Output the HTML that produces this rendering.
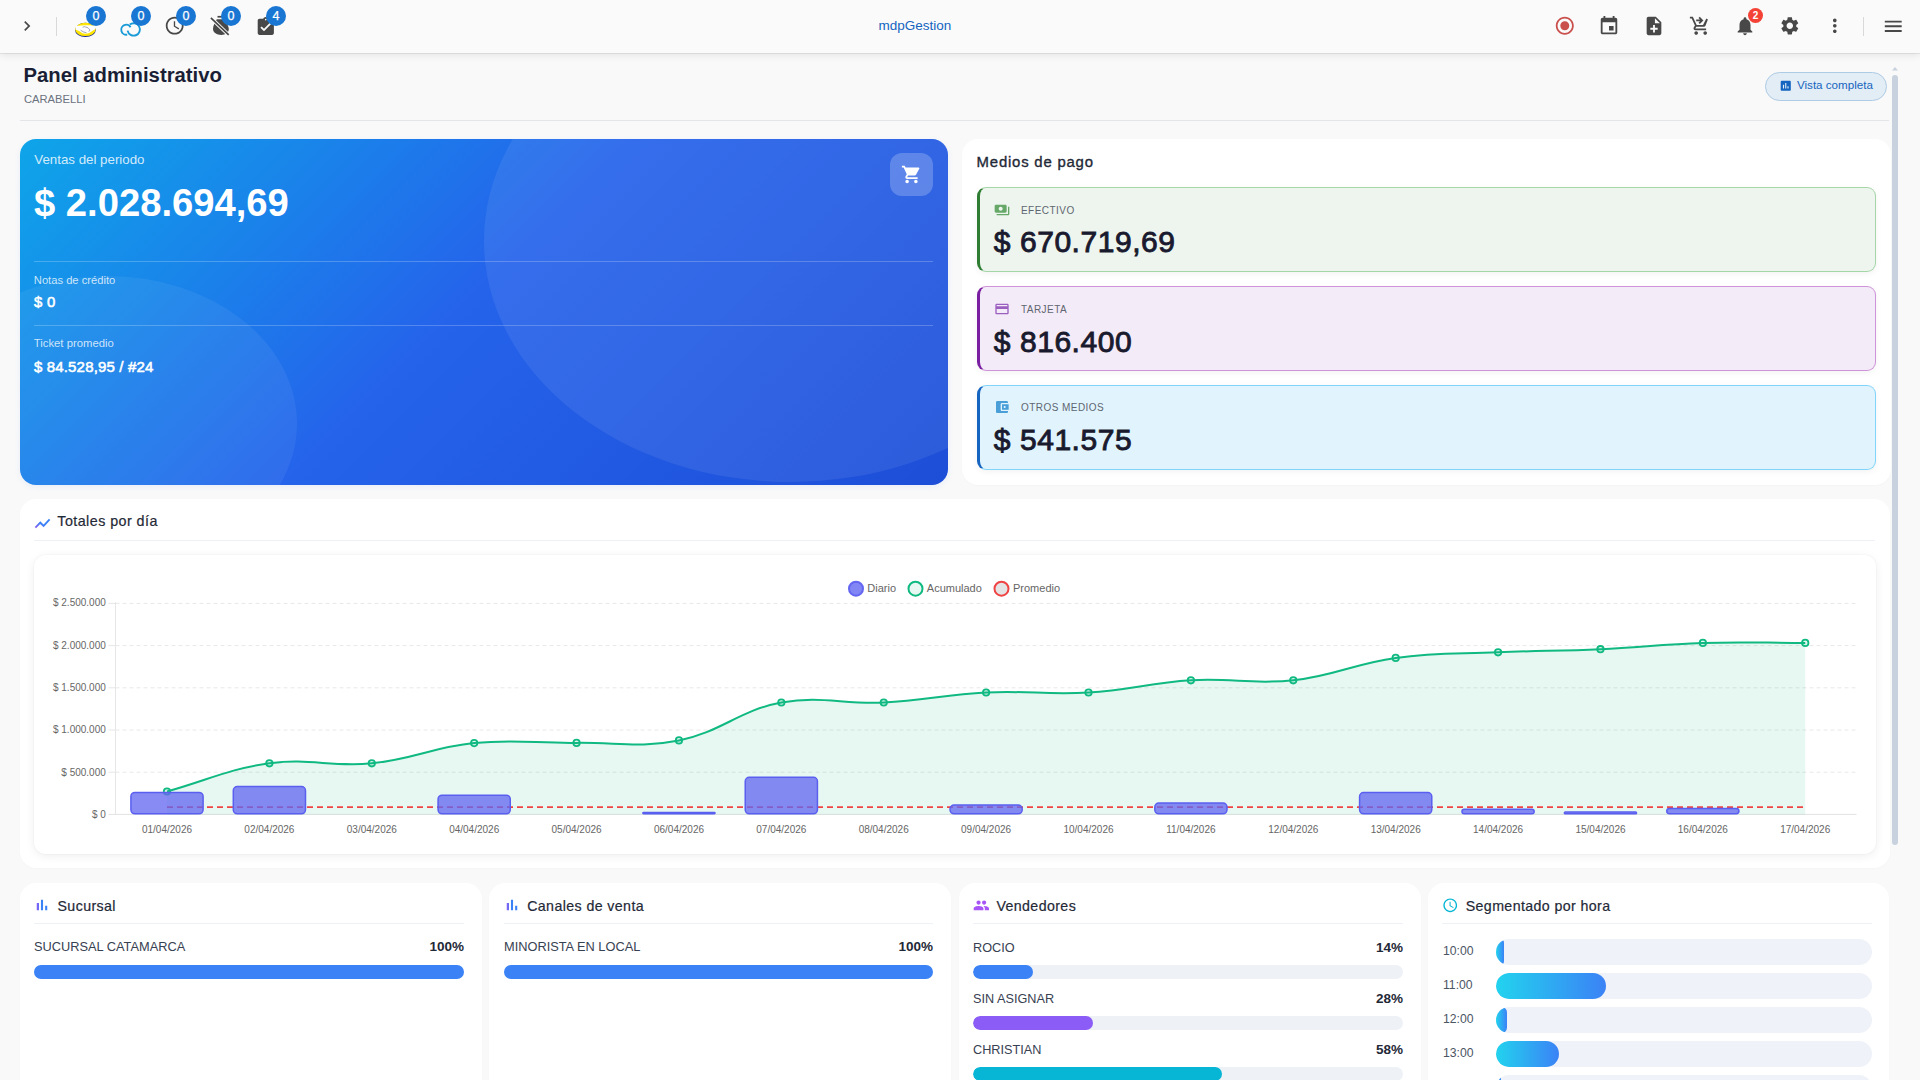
<!DOCTYPE html><html><head><meta charset="utf-8"><title>Panel administrativo</title><style>
*{box-sizing:border-box;margin:0;padding:0}
html,body{width:1920px;height:1080px;overflow:hidden;background:#f9f9f9;font-family:"Liberation Sans", sans-serif}
.abs{position:absolute}
.card{position:absolute;background:#fff;border-radius:16px;box-shadow:0 1px 2px rgba(0,0,0,.02)}
</style></head><body>
<div class="abs" style="left:0;top:0;width:1920px;height:53px;background:#fafafa;box-shadow:0 1px 0 rgba(0,0,0,.075),0 2px 8px rgba(0,0,0,.09);z-index:5">
<svg style="position:absolute;left:16.9px;top:16px;width:20px;height:20px" viewBox="0 0 24 24"><path fill="#484848" d="M10 6L8.59 7.41 13.17 12l-4.58 4.59L10 18l6-6z"/></svg>
<div class="abs" style="left:56px;top:17px;width:1px;height:19px;background:#d9d9d9"></div>
<svg class="abs" style="left:73px;top:21px;width:25px;height:18px" viewBox="73 21 25 18">
<ellipse cx="85.4" cy="29.9" rx="10.4" ry="7.1" fill="#1f2a8c"/>
<ellipse cx="85.4" cy="29.4" rx="10.2" ry="6.7" fill="#ffe600"/>
<path d="M75.6 26.2 C78 25.3 80.5 25.6 82.6 25.4 C85 24.9 87.5 25.6 90 25.2 C92 25.4 94 25.6 95.3 26.4 L95.2 29.2 C93.5 30.2 91.2 31.8 89.2 33 C86.8 33.8 84.5 33.9 82.3 33.2 C80.2 31.8 78 30.4 75.6 29.6 Z" fill="#ffffff"/>
<path d="M82.6 27.3 L84.2 26.6 L88 27.8 L90 30 L88.8 31.6 M80.6 30.2 L83.2 31.8 L86.5 32.8" fill="none" stroke="#6b6f80" stroke-width="0.6"/>
</svg>
<svg class="abs" style="left:119px;top:21px;width:23px;height:17px" viewBox="119 21 23 17">
<path d="M130.6 27.2 A5 5 0 1 0 127.2 34.6" fill="none" stroke="#1a9ad6" stroke-width="1.9"/>
<path d="M127.6 30.6 A6.2 6.2 0 1 0 129.8 24.6" fill="none" stroke="#1a9ad6" stroke-width="1.9"/>
</svg>
<svg style="position:absolute;left:164.4px;top:15.2px;width:21.4px;height:21.4px" viewBox="0 0 24 24"><path fill="#484848" d="M11.99 2C6.47 2 2 6.48 2 12s4.47 10 9.99 10C17.52 22 22 17.52 22 12S17.52 2 11.99 2zM12 20c-4.42 0-8-3.58-8-8s3.58-8 8-8 8 3.58 8 8-3.58 8-8 8zm.5-13H11v6l5.25 3.15.75-1.23-4.5-2.67z"/></svg>
<svg class="abs" style="left:208px;top:13px;width:24px;height:24px" viewBox="208 13 24 24">
<path d="M217.5 15.9h5v1.7h-5z" fill="#484848"/>
<path d="M216.8 19.2h6.6l1.6 2.2c2.2 2.3 3.8 5 3.8 7.6 0 3.6-3.4 5.9-7.6 5.9s-8.2-2.3-8.2-5.9c0-3.1 1.7-6.2 3.8-9.8z" fill="#484848"/>
<path d="M210.6 17.6 L229 35.2" stroke="#fafafa" stroke-width="3.6"/>
<path d="M210.9 17.9 L228.7 34.9" stroke="#484848" stroke-width="1.7"/>
</svg>
<svg style="position:absolute;left:255.3px;top:16.1px;width:21.6px;height:21.6px" viewBox="0 0 24 24"><path fill="#484848" d="M19 3h-4.18C14.4 1.840 13.3 1 12 1c-1.3 0-2.4.84-2.82 2H5c-1.1 0-2 .9-2 2v14c0 1.1.9 2 2 2h14c1.1 0 2-.9 2-2V5c0-1.1-.9-2-2-2zm-7 0c.55 0 1 .45 1 1s-.45 1-1 1-1-.45-1-1 .45-1 1-1zm-2 14l-4-4 1.41-1.41L10 14.17l6.59-6.59L18 9l-8 8z"/></svg>
<div class="abs" style="left:86px;top:5.8px;width:20px;height:20px;border-radius:50%;background:#1976d2;color:#fff;font-size:12.5px;line-height:20px;text-align:center;font-weight:400;-webkit-text-stroke:.25px #fff">0</div>
<div class="abs" style="left:131px;top:5.8px;width:20px;height:20px;border-radius:50%;background:#1976d2;color:#fff;font-size:12.5px;line-height:20px;text-align:center;font-weight:400;-webkit-text-stroke:.25px #fff">0</div>
<div class="abs" style="left:176px;top:5.8px;width:20px;height:20px;border-radius:50%;background:#1976d2;color:#fff;font-size:12.5px;line-height:20px;text-align:center;font-weight:400;-webkit-text-stroke:.25px #fff">0</div>
<div class="abs" style="left:221px;top:5.8px;width:20px;height:20px;border-radius:50%;background:#1976d2;color:#fff;font-size:12.5px;line-height:20px;text-align:center;font-weight:400;-webkit-text-stroke:.25px #fff">0</div>
<div class="abs" style="left:266px;top:5.8px;width:20px;height:20px;border-radius:50%;background:#1976d2;color:#fff;font-size:12.5px;line-height:20px;text-align:center;font-weight:400;-webkit-text-stroke:.25px #fff">4</div>
<div style="position:absolute;left:878.5px;top:18.57px;font-size:13.5px;line-height:13.5px;color:#1565c0;font-weight:400;white-space:nowrap">mdpGestion</div>
<svg style="position:absolute;left:1554px;top:15.2px;width:21.6px;height:21.6px" viewBox="0 0 24 24"><path fill="#c9504d" d="M12 7c-2.76 0-5 2.24-5 5s2.24 5 5 5 5-2.24 5-5-2.24-5-5-5zm0-5C6.48 2 2 6.48 2 12s4.48 10 10 10 10-4.48 10-10S17.52 2 12 2zm0 18c-4.42 0-8-3.58-8-8s3.58-8 8-8 8 3.58 8 8-3.58 8-8 8z"/></svg>
<svg style="position:absolute;left:1598.2px;top:15.1px;width:22px;height:22px" viewBox="0 0 24 24"><path fill="#484848" d="M17 12h-5v5h5v-5zM16 1v2H8V1H6v2H5c-1.110 0-1.99.9-1.99 2L3 19c0 1.1.89 2 2 2h14c1.1 0 2-.9 2-2V5c0-1.1-.9-2-2-2h-1V1h-2zm3 18H5V8h14v11z"/></svg>
<svg style="position:absolute;left:1643.3px;top:15.2px;width:22px;height:22px" viewBox="0 0 24 24"><path fill="#484848" d="M14 2H6c-1.1 0-1.99.9-1.99 2L4 20c0 1.1.89 2 1.99 2H18c1.1 0 2-.9 2-2V8l-6-6zm2 14h-3v3h-2v-3H8v-2h3v-3h2v3h3v2zm-3-7V3.5L18.5 9H13z"/></svg>
<svg style="position:absolute;left:1689.1px;top:14.9px;width:21.6px;height:21.6px" viewBox="0 0 24 24"><path fill="#484848" d="M8 18c-1.1 0-1.99.9-1.99 2S6.9 22 8 22s2-.9 2-2-.9-2-2-2zm10 0c-1.1 0-1.99.9-1.99 2s.89 2 1.99 2 2-.9 2-2-.9-2-2-2zm-8.9-5h7.45c.75 0 1.41-.41 1.75-1.03L21 4.96 19.25 4l-3.7 7H8.53L4.27 2H1v2h2l3.6 7.59-1.35 2.44C4.52 15.37 5.48 17 7 17h12v-2H7l1.1-2zM12 2l4 4-4 4-1.41-1.41L12.17 7H8V5h4.17l-1.59-1.59L12 2z"/></svg>
<svg style="position:absolute;left:1733.7px;top:14.6px;width:22px;height:22px" viewBox="0 0 24 24"><path fill="#484848" d="M12 22c1.1 0 2-.9 2-2h-4c0 1.1.89 2 2 2zm6-6v-5c0-3.07-1.64-5.64-4.5-6.32V4c0-.83-.67-1.5-1.5-1.5s-1.5.67-1.5 1.5v.68C7.63 5.36 6 7.92 6 11v5l-2 2v1h16v-1l-2-2z"/></svg>
<div class="abs" style="left:1748px;top:8.4px;width:15px;height:15px;border-radius:50%;background:#f44336;color:#fff;font-size:10px;line-height:15px;text-align:center;font-weight:700">2</div>
<svg style="position:absolute;left:1778.6px;top:15.2px;width:21.6px;height:21.6px" viewBox="0 0 24 24"><path fill="#484848" d="M19.14 12.94c.04-.3.06-.61.06-.94 0-.32-.02-.64-.07-.94l2.030-1.58c.18-.14.23-.41.12-.61l-1.92-3.32c-.12-.22-.37-.29-.59-.22l-2.39.96c-.5-.38-1.03-.7-1.62-.94l-.36-2.54c-.04-.24-.24-.41-.48-.41h-3.84c-.24 0-.43.17-.47.41l-.36 2.54c-.59.24-1.13.57-1.62.94l-2.39-.96c-.22-.08-.47 0-.59.22L2.74 8.87c-.12.21-.08.47.12.61l2.03 1.58c-.05.3-.09.63-.09.94s.02.64.07.94l-2.03 1.58c-.18.14-.23.41-.12.61l1.92 3.32c.12.22.37.29.59.22l2.39-.96c.5.38 1.03.7 1.62.94l.36 2.54c.05.24.24.41.48.41h3.84c.24 0 .44-.17.47-.41l.36-2.54c.59-.24 1.13-.56 1.62-.94l2.39.96c.22.08.47 0 .59-.22l1.92-3.32c.12-.22.07-.47-.12-.61l-2.01-1.58zM12 15.6c-1.98 0-3.6-1.62-3.6-3.6s1.62-3.6 3.6-3.6 3.6 1.62 3.6 3.6-1.62 3.6-3.6 3.6z"/></svg>
<svg style="position:absolute;left:1824.2px;top:15.3px;width:21.6px;height:21.6px" viewBox="0 0 24 24"><path fill="#484848" d="M12 8c1.1 0 2-.9 2-2s-.9-2-2-2-2 .9-2 2 .9 2 2 2zm0 2c-1.1 0-2 .9-2 2s.9 2 2 2 2-.9 2-2-.9-2-2-2zm0 6c-1.1 0-2 .9-2 2s.9 2 2 2 2-.9 2-2-.9-2-2-2z"/></svg>
<div class="abs" style="left:1863px;top:17px;width:1px;height:19px;background:#d9d9d9"></div>
<svg style="position:absolute;left:1882.2px;top:14.6px;width:22.5px;height:22.5px" viewBox="0 0 24 24"><path fill="#484848" d="M3 18h18v-2H3v2zm0-5h18v-2H3v2zm0-7v2h18V6H3z"/></svg>
</div>
<div style="position:absolute;left:23.5px;top:64.82px;font-size:20.3px;line-height:20.3px;color:#1a1f36;font-weight:700;white-space:nowrap">Panel administrativo</div>
<div style="position:absolute;left:24px;top:94.32px;font-size:11.2px;line-height:11.2px;color:#6b7280;font-weight:400;white-space:nowrap">CARABELLI</div>
<div class="abs" style="left:20px;top:120px;width:1869px;height:1px;background:#e3e5e8"></div>
<div class="abs" style="left:1765px;top:72px;width:122px;height:29px;border-radius:15px;background:#e3edf5;border:1px solid #aecbe5"></div>
<svg style="position:absolute;left:1778.5px;top:79px;width:13.5px;height:13.5px" viewBox="0 0 24 24"><path fill="#1565c0" d="M19 3H5c-1.1 0-2 .9-2 2v14c0 1.1.9 2 2 2h14c1.1 0 2-.9 2-2V5c0-1.1-.9-2-2-2zM9 17H7v-7h2v7zm4 0h-2V7h2v10zm4 0h-2v-4h2v4z"/></svg>
<div style="position:absolute;left:1797px;top:78.88px;font-size:11.6px;line-height:11.6px;color:#1565c0;font-weight:400;white-space:nowrap">Vista completa</div>
<div class="abs" style="left:1892px;top:75px;width:6px;height:770px;border-radius:3px;background:#c8d2de"></div>
<svg class="abs" style="left:1891px;top:66px;width:8px;height:5px" viewBox="0 0 8 5"><path d="M1 4.5 L4 1 L7 4.5z" fill="#c8d2de"/></svg>
<div class="abs" style="left:20px;top:139px;width:928px;height:346px;border-radius:16px;overflow:hidden;background:linear-gradient(135deg,#0ea5e9 0%,#2563eb 48%,#1d4ed8 100%);box-shadow:0 2px 6px rgba(37,99,235,.08)">
<div class="abs" style="left:463.8px;top:-139.0px;width:613.2px;height:481.8px;border-radius:50%;background:rgba(255,255,255,.075)"></div>
<div class="abs" style="left:-102.0px;top:137.1px;width:378.8px;height:294.8px;border-radius:50%;background:rgba(255,255,255,.06)"></div>
</div>
<div style="position:absolute;left:34.3px;top:153.44px;font-size:13.3px;line-height:13.3px;color:rgba(255,255,255,.82);font-weight:400;white-space:nowrap">Ventas del periodo</div>
<div style="position:absolute;left:34px;top:183.96px;font-size:38.2px;line-height:38.2px;color:#fff;font-weight:700;white-space:nowrap">$ 2.028.694,69</div>
<div class="abs" style="left:34px;top:261px;width:899px;height:1px;background:rgba(255,255,255,.22)"></div>
<div style="position:absolute;left:33.8px;top:274.52px;font-size:11.2px;line-height:11.2px;color:rgba(255,255,255,.78);font-weight:400;white-space:nowrap">Notas de crédito</div>
<div style="position:absolute;left:33.9px;top:295.39px;font-size:14.9px;line-height:14.9px;color:#fff;font-weight:400;white-space:nowrap;letter-spacing:.3px;-webkit-text-stroke:.55px #fff">$ 0</div>
<div class="abs" style="left:34px;top:325px;width:899px;height:1px;background:rgba(255,255,255,.22)"></div>
<div style="position:absolute;left:33.8px;top:337.93px;font-size:11.3px;line-height:11.3px;color:rgba(255,255,255,.78);font-weight:400;white-space:nowrap">Ticket promedio</div>
<div style="position:absolute;left:33.9px;top:359.30px;font-size:15.0px;line-height:15.0px;color:#fff;font-weight:400;white-space:nowrap;letter-spacing:.17px;-webkit-text-stroke:.55px #fff">$ 84.528,95 / #24</div>
<div class="abs" style="left:890px;top:153px;width:43px;height:43px;border-radius:12px;background:rgba(255,255,255,.22)"></div>
<svg style="position:absolute;left:900.5px;top:163.5px;width:21px;height:21px" viewBox="0 0 24 24"><path fill="#fff" d="M7 18c-1.1 0-1.99.9-1.99 2S5.9 22 7 22s2-.9 2-2-.9-2-2-2zM1 2v2h2l3.6 7.59-1.35 2.45c-.16.28-.25.61-.25.96 0 1.1.9 2 2 2h12v-2H7.42c-.14 0-.25-.11-.25-.25l.03-.12.9-1.63h7.45c.75 0 1.41-.41 1.75-1.03l3.58-6.49c.08-.14.12-.31.12-.48 0-.55-.45-1-1-1H5.21l-.94-2H1zm16 16c-1.1 0-1.99.9-1.990 2s.89 2 1.99 2 2-.9 2-2-.9-2-2-2z"/></svg>
<div class="card" style="left:961.5px;top:139px;width:929px;height:346px"></div>
<div style="position:absolute;left:976.6px;top:154.59px;font-size:14.9px;line-height:14.9px;color:#1f2937;font-weight:400;white-space:nowrap;letter-spacing:.8px;-webkit-text-stroke:.35px #1f2937">Medios de pago</div>
<div class="abs" style="left:977px;top:187px;width:899px;height:85px;border-radius:9px;background:#edf5ee;border:1px solid #a5d6a7;border-left:3px solid #2e7d32;box-shadow:0 2px 6px rgba(0,0,0,.05)"></div>
<svg style="position:absolute;left:993.5px;top:201.5px;width:16px;height:16px" viewBox="0 0 24 24"><path fill="#66a867" d="M19 14V6c0-1.1-.9-2-2-2H3c-1.1 0-2 .9-2 2v8c0 1.1.9 2 2 2h14c1.1 0 2-.9 2-2zm-9-1c-1.66 0-3-1.34-3-3s1.34-3 3-3 3 1.34 3 3-1.34 3-3 3zm13-6v11c0 1.1-.9 2-2 2H4v-2h17V7h2z"/></svg>
<div style="position:absolute;left:1021px;top:205.53px;font-size:10px;line-height:10px;color:#5f6670;font-weight:400;white-space:nowrap;letter-spacing:.45px">EFECTIVO</div>
<div style="position:absolute;left:993.8px;top:226.60px;font-size:30px;line-height:30px;color:#1a1a2e;font-weight:400;white-space:nowrap;letter-spacing:.55px;-webkit-text-stroke:.9px #1a1a2e">$ 670.719,69</div>
<div class="abs" style="left:977px;top:286px;width:899px;height:85px;border-radius:9px;background:#f4ebf8;border:1px solid #ce93d8;border-left:3px solid #7b1fa2;box-shadow:0 2px 6px rgba(0,0,0,.05)"></div>
<svg style="position:absolute;left:993.5px;top:300.5px;width:16px;height:16px" viewBox="0 0 24 24"><path fill="#9b5fc0" d="M20 4H4c-1.11 0-1.99.89-1.99 2L2 18c0 1.11.89 2 2 2h16c1.11 0 2-.89 2-2V6c0-1.11-.89-2-2-2zm0 14H4v-6h16v6zm0-10H4V6h16v2z"/></svg>
<div style="position:absolute;left:1021px;top:304.54px;font-size:10px;line-height:10px;color:#5f6670;font-weight:400;white-space:nowrap;letter-spacing:.45px">TARJETA</div>
<div style="position:absolute;left:993.8px;top:326.61px;font-size:30px;line-height:30px;color:#1a1a2e;font-weight:400;white-space:nowrap;letter-spacing:.55px;-webkit-text-stroke:.9px #1a1a2e">$ 816.400</div>
<div class="abs" style="left:977px;top:385px;width:899px;height:85px;border-radius:9px;background:#e1f4fd;border:1px solid #81d4fa;border-left:3px solid #1565c0;box-shadow:0 2px 6px rgba(0,0,0,.05)"></div>
<svg style="position:absolute;left:993.5px;top:399.2px;width:16px;height:16px" viewBox="0 0 24 24"><path fill="#4a9fd8" d="M21 18v1c0 1.1-.9 2-2 2H5c-1.11 0-2-.9-2-2V5c0-1.1.89-2 2-2h14c1.1 0 2 .9 2 2v1h-9c-1.11 0-2 .9-2 2v8c0 1.1.89 2 2 2h9zm-9-2h10V8H12v8zm4-2.5c-.83 0-1.5-.67-1.5-1.5s.67-1.5 1.5-1.5 1.5.67 1.5 1.5-.67 1.5-1.5 1.5z"/></svg>
<div style="position:absolute;left:1021px;top:403.24px;font-size:10px;line-height:10px;color:#5f6670;font-weight:400;white-space:nowrap;letter-spacing:.45px">OTROS MEDIOS</div>
<div style="position:absolute;left:993.8px;top:425.21px;font-size:30px;line-height:30px;color:#1a1a2e;font-weight:400;white-space:nowrap;letter-spacing:.55px;-webkit-text-stroke:.9px #1a1a2e">$ 541.575</div>
<div class="card" style="left:20px;top:499px;width:1869.5px;height:369px"></div>
<svg class="abs" style="left:33px;top:515px;width:19px;height:16px" viewBox="0 0 19 16"><defs><linearGradient id="gsc" x1="0" y1="1" x2="1" y2="0"><stop offset="0" stop-color="#8b5cf6"/><stop offset=".45" stop-color="#3b82f6"/><stop offset="1" stop-color="#3b82f6"/></linearGradient></defs>
<path d="M2.4 12.6 L7.3 7.7 L10.6 10.9 L16.6 4.3" fill="none" stroke="url(#gsc)" stroke-width="1.9" stroke-linejoin="miter"/></svg>
<div style="position:absolute;left:57.3px;top:514.20px;font-size:14.3px;line-height:14.3px;color:#1f2937;font-weight:400;white-space:nowrap;letter-spacing:.45px;-webkit-text-stroke:.2px #1f2937">Totales por día</div>
<div class="abs" style="left:34px;top:540px;width:1841px;height:1px;background:#eef1f5"></div>
<div class="abs" style="left:34px;top:555px;width:1842px;height:299px;border-radius:12px;background:#fff;box-shadow:0 0 0 1px rgba(0,0,0,.015),0 2px 10px rgba(0,0,0,.07)"></div>
<svg class="abs" style="left:34px;top:555px;width:1842px;height:299px" viewBox="34 555 1842 299"><line x1="108.5" y1="603.4" x2="115.5" y2="603.4" stroke="#e6e6e6" stroke-width="1"/><line x1="115.5" y1="603.4" x2="1855.5" y2="603.4" stroke="#e8e8e8" stroke-width="1" stroke-dasharray="4 3"/><line x1="108.5" y1="645.6" x2="115.5" y2="645.6" stroke="#e6e6e6" stroke-width="1"/><line x1="115.5" y1="645.6" x2="1855.5" y2="645.6" stroke="#e8e8e8" stroke-width="1" stroke-dasharray="4 3"/><line x1="108.5" y1="687.8" x2="115.5" y2="687.8" stroke="#e6e6e6" stroke-width="1"/><line x1="115.5" y1="687.8" x2="1855.5" y2="687.8" stroke="#e8e8e8" stroke-width="1" stroke-dasharray="4 3"/><line x1="108.5" y1="730.0" x2="115.5" y2="730.0" stroke="#e6e6e6" stroke-width="1"/><line x1="115.5" y1="730.0" x2="1855.5" y2="730.0" stroke="#e8e8e8" stroke-width="1" stroke-dasharray="4 3"/><line x1="108.5" y1="772.2" x2="115.5" y2="772.2" stroke="#e6e6e6" stroke-width="1"/><line x1="115.5" y1="772.2" x2="1855.5" y2="772.2" stroke="#e8e8e8" stroke-width="1" stroke-dasharray="4 3"/><line x1="108.5" y1="814.4" x2="1856.5" y2="814.4" stroke="#e2e2e2" stroke-width="1"/><line x1="115.5" y1="602" x2="115.5" y2="814.4" stroke="#e6e6e6" stroke-width="1"/><text x="105.8" y="606.1" text-anchor="end" font-size="10" fill="#666" font-family="Liberation Sans">$ 2.500.000</text><text x="105.8" y="648.5" text-anchor="end" font-size="10" fill="#666" font-family="Liberation Sans">$ 2.000.000</text><text x="105.8" y="690.9" text-anchor="end" font-size="10" fill="#666" font-family="Liberation Sans">$ 1.500.000</text><text x="105.8" y="733.2" text-anchor="end" font-size="10" fill="#666" font-family="Liberation Sans">$ 1.000.000</text><text x="105.8" y="775.6" text-anchor="end" font-size="10" fill="#666" font-family="Liberation Sans">$ 500.000</text><text x="105.8" y="817.9" text-anchor="end" font-size="10" fill="#666" font-family="Liberation Sans">$ 0</text><text x="167.0" y="833.1" text-anchor="middle" font-size="10" fill="#666" font-family="Liberation Sans">01/04/2026</text><text x="269.4" y="833.1" text-anchor="middle" font-size="10" fill="#666" font-family="Liberation Sans">02/04/2026</text><text x="371.8" y="833.1" text-anchor="middle" font-size="10" fill="#666" font-family="Liberation Sans">03/04/2026</text><text x="474.2" y="833.1" text-anchor="middle" font-size="10" fill="#666" font-family="Liberation Sans">04/04/2026</text><text x="576.6" y="833.1" text-anchor="middle" font-size="10" fill="#666" font-family="Liberation Sans">05/04/2026</text><text x="679.0" y="833.1" text-anchor="middle" font-size="10" fill="#666" font-family="Liberation Sans">06/04/2026</text><text x="781.3" y="833.1" text-anchor="middle" font-size="10" fill="#666" font-family="Liberation Sans">07/04/2026</text><text x="883.7" y="833.1" text-anchor="middle" font-size="10" fill="#666" font-family="Liberation Sans">08/04/2026</text><text x="986.1" y="833.1" text-anchor="middle" font-size="10" fill="#666" font-family="Liberation Sans">09/04/2026</text><text x="1088.5" y="833.1" text-anchor="middle" font-size="10" fill="#666" font-family="Liberation Sans">10/04/2026</text><text x="1190.9" y="833.1" text-anchor="middle" font-size="10" fill="#666" font-family="Liberation Sans">11/04/2026</text><text x="1293.3" y="833.1" text-anchor="middle" font-size="10" fill="#666" font-family="Liberation Sans">12/04/2026</text><text x="1395.7" y="833.1" text-anchor="middle" font-size="10" fill="#666" font-family="Liberation Sans">13/04/2026</text><text x="1498.1" y="833.1" text-anchor="middle" font-size="10" fill="#666" font-family="Liberation Sans">14/04/2026</text><text x="1600.5" y="833.1" text-anchor="middle" font-size="10" fill="#666" font-family="Liberation Sans">15/04/2026</text><text x="1702.8" y="833.1" text-anchor="middle" font-size="10" fill="#666" font-family="Liberation Sans">16/04/2026</text><text x="1805.2" y="833.1" text-anchor="middle" font-size="10" fill="#666" font-family="Liberation Sans">17/04/2026</text><path d="M167.00,791.50 C207.96,780.22 227.69,769.04 269.39,763.30 C309.60,757.76 331.21,767.30 371.78,763.30 C413.13,759.22 432.82,747.22 474.17,743.10 C514.74,739.06 535.61,743.44 576.56,742.90 C617.52,742.36 639.30,748.22 678.95,740.40 C721.21,732.06 739.07,710.32 781.34,702.50 C820.98,695.16 842.87,704.50 883.73,702.50 C924.78,700.50 945.07,694.50 986.12,692.50 C1026.98,690.50 1047.70,694.93 1088.51,692.50 C1129.61,690.05 1149.80,682.75 1190.90,680.30 C1231.71,677.87 1252.81,684.73 1293.29,680.30 C1334.72,675.77 1354.28,663.56 1395.68,657.90 C1436.19,652.36 1457.09,654.04 1498.07,652.30 C1539.00,650.56 1559.53,651.08 1600.46,649.20 C1641.45,647.32 1661.86,644.16 1702.85,642.90 C1743.77,641.64 1764.28,642.90 1805.24,642.90 L1805.24,814.4 L167.00,814.4 Z" fill="rgba(16,185,129,.1)"/><path d="M167.00,791.50 C207.96,780.22 227.69,769.04 269.39,763.30 C309.60,757.76 331.21,767.30 371.78,763.30 C413.13,759.22 432.82,747.22 474.17,743.10 C514.74,739.06 535.61,743.44 576.56,742.90 C617.52,742.36 639.30,748.22 678.95,740.40 C721.21,732.06 739.07,710.32 781.34,702.50 C820.98,695.16 842.87,704.50 883.73,702.50 C924.78,700.50 945.07,694.50 986.12,692.50 C1026.98,690.50 1047.70,694.93 1088.51,692.50 C1129.61,690.05 1149.80,682.75 1190.90,680.30 C1231.71,677.87 1252.81,684.73 1293.29,680.30 C1334.72,675.77 1354.28,663.56 1395.68,657.90 C1436.19,652.36 1457.09,654.04 1498.07,652.30 C1539.00,650.56 1559.53,651.08 1600.46,649.20 C1641.45,647.32 1661.86,644.16 1702.85,642.90 C1743.77,641.64 1764.28,642.90 1805.24,642.90" fill="none" stroke="#10b981" stroke-width="2"/><circle cx="167.00" cy="791.50" r="3.2" fill="rgba(16,185,129,.12)" stroke="#10b981" stroke-width="1.8"/><circle cx="269.39" cy="763.30" r="3.2" fill="rgba(16,185,129,.12)" stroke="#10b981" stroke-width="1.8"/><circle cx="371.78" cy="763.30" r="3.2" fill="rgba(16,185,129,.12)" stroke="#10b981" stroke-width="1.8"/><circle cx="474.17" cy="743.10" r="3.2" fill="rgba(16,185,129,.12)" stroke="#10b981" stroke-width="1.8"/><circle cx="576.56" cy="742.90" r="3.2" fill="rgba(16,185,129,.12)" stroke="#10b981" stroke-width="1.8"/><circle cx="678.95" cy="740.40" r="3.2" fill="rgba(16,185,129,.12)" stroke="#10b981" stroke-width="1.8"/><circle cx="781.34" cy="702.50" r="3.2" fill="rgba(16,185,129,.12)" stroke="#10b981" stroke-width="1.8"/><circle cx="883.73" cy="702.50" r="3.2" fill="rgba(16,185,129,.12)" stroke="#10b981" stroke-width="1.8"/><circle cx="986.12" cy="692.50" r="3.2" fill="rgba(16,185,129,.12)" stroke="#10b981" stroke-width="1.8"/><circle cx="1088.51" cy="692.50" r="3.2" fill="rgba(16,185,129,.12)" stroke="#10b981" stroke-width="1.8"/><circle cx="1190.90" cy="680.30" r="3.2" fill="rgba(16,185,129,.12)" stroke="#10b981" stroke-width="1.8"/><circle cx="1293.29" cy="680.30" r="3.2" fill="rgba(16,185,129,.12)" stroke="#10b981" stroke-width="1.8"/><circle cx="1395.68" cy="657.90" r="3.2" fill="rgba(16,185,129,.12)" stroke="#10b981" stroke-width="1.8"/><circle cx="1498.07" cy="652.30" r="3.2" fill="rgba(16,185,129,.12)" stroke="#10b981" stroke-width="1.8"/><circle cx="1600.46" cy="649.20" r="3.2" fill="rgba(16,185,129,.12)" stroke="#10b981" stroke-width="1.8"/><circle cx="1702.85" cy="642.90" r="3.2" fill="rgba(16,185,129,.12)" stroke="#10b981" stroke-width="1.8"/><circle cx="1805.24" cy="642.90" r="3.2" fill="rgba(16,185,129,.12)" stroke="#10b981" stroke-width="1.8"/><line x1="167.0" y1="807.1" x2="1805.2" y2="807.1" stroke="#ef4444" stroke-width="1.8" stroke-dasharray="6 4"/><rect x="130.90" y="792.40" width="72.2" height="21.40" rx="4.00" fill="rgba(99,102,241,.76)" stroke="#5b5ff0" stroke-width="1.5"/><rect x="233.29" y="786.60" width="72.2" height="27.20" rx="4.00" fill="rgba(99,102,241,.76)" stroke="#5b5ff0" stroke-width="1.5"/><rect x="438.07" y="795.20" width="72.2" height="18.60" rx="4.00" fill="rgba(99,102,241,.76)" stroke="#5b5ff0" stroke-width="1.5"/><rect x="642.85" y="812.40" width="72.2" height="1.40" rx="0.70" fill="rgba(99,102,241,.76)" stroke="#5b5ff0" stroke-width="1.5"/><rect x="745.24" y="777.30" width="72.2" height="36.50" rx="4.00" fill="rgba(99,102,241,.76)" stroke="#5b5ff0" stroke-width="1.5"/><rect x="950.02" y="805.10" width="72.2" height="8.70" rx="4.00" fill="rgba(99,102,241,.76)" stroke="#5b5ff0" stroke-width="1.5"/><rect x="1154.80" y="803.00" width="72.2" height="10.80" rx="4.00" fill="rgba(99,102,241,.76)" stroke="#5b5ff0" stroke-width="1.5"/><rect x="1359.58" y="792.60" width="72.2" height="21.20" rx="4.00" fill="rgba(99,102,241,.76)" stroke="#5b5ff0" stroke-width="1.5"/><rect x="1461.97" y="809.20" width="72.2" height="4.60" rx="2.30" fill="rgba(99,102,241,.76)" stroke="#5b5ff0" stroke-width="1.5"/><rect x="1564.36" y="812.00" width="72.2" height="1.80" rx="0.90" fill="rgba(99,102,241,.76)" stroke="#5b5ff0" stroke-width="1.5"/><rect x="1666.75" y="808.40" width="72.2" height="5.40" rx="2.70" fill="rgba(99,102,241,.76)" stroke="#5b5ff0" stroke-width="1.5"/><circle cx="856" cy="588.7" r="7" fill="rgba(99,102,241,.8)" stroke="#6366f1" stroke-width="2"/><text x="867.3" y="591.8" font-size="11" fill="#666" font-family="Liberation Sans">Diario</text><circle cx="915.5" cy="588.7" r="7" fill="rgba(16,185,129,.1)" stroke="#10b981" stroke-width="2"/><text x="926.8" y="591.8" font-size="11" fill="#666" font-family="Liberation Sans">Acumulado</text><circle cx="1001.5" cy="588.7" r="7" fill="#e4e4e4" stroke="#ef4444" stroke-width="2"/><text x="1013" y="591.8" font-size="11" fill="#666" font-family="Liberation Sans">Promedio</text></svg>
<div class="card" style="left:20px;top:883px;width:461.7px;height:260px"></div>
<div class="card" style="left:489px;top:883px;width:461.5px;height:260px"></div>
<div class="card" style="left:959px;top:883px;width:462px;height:260px"></div>
<div class="card" style="left:1428px;top:883px;width:461px;height:260px"></div>
<svg class="abs" style="left:33.4px;top:896px;width:18px;height:18px" viewBox="0 0 24 24"><defs><linearGradient id="gb0" x1="0" y1="0" x2="1" y2="0"><stop offset="0" stop-color="#8b5cf6"/><stop offset=".35" stop-color="#3b82f6"/><stop offset="1" stop-color="#3b82f6"/></linearGradient></defs><path fill="url(#gb0)" d="M5 9.2h3V19H5zM10.6 5h2.8v14h-2.8zm5.6 8H19v6h-2.8z"/></svg>
<div style="position:absolute;left:57.5px;top:898.58px;font-size:14.2px;line-height:14.2px;color:#1f2937;font-weight:400;white-space:nowrap;letter-spacing:.4px;-webkit-text-stroke:.2px #1f2937">Sucursal</div>
<svg class="abs" style="left:502.9px;top:896px;width:18px;height:18px" viewBox="0 0 24 24"><defs><linearGradient id="gb1" x1="0" y1="0" x2="1" y2="0"><stop offset="0" stop-color="#8b5cf6"/><stop offset=".35" stop-color="#3b82f6"/><stop offset="1" stop-color="#3b82f6"/></linearGradient></defs><path fill="url(#gb1)" d="M5 9.2h3V19H5zM10.6 5h2.8v14h-2.8zm5.6 8H19v6h-2.8z"/></svg>
<div style="position:absolute;left:527.2px;top:898.58px;font-size:14.2px;line-height:14.2px;color:#1f2937;font-weight:400;white-space:nowrap;letter-spacing:.4px;-webkit-text-stroke:.2px #1f2937">Canales de venta</div>
<div class="abs" style="left:34px;top:923px;width:430px;height:1px;background:#eef2f7"></div>
<div style="position:absolute;left:34px;top:940.86px;font-size:12.8px;line-height:12.8px;color:#374151;font-weight:400;white-space:nowrap">SUCURSAL CATAMARCA</div>
<div style="position:absolute;right:1456px;top:940.47px;font-size:13.5px;line-height:13.5px;color:#1f2937;font-weight:700;white-space:nowrap">100%</div>
<div class="abs" style="left:34px;top:965px;width:430px;height:14px;border-radius:7px;background:#3b82f6"></div>
<div class="abs" style="left:504px;top:923px;width:429px;height:1px;background:#eef2f7"></div>
<div style="position:absolute;left:504px;top:940.86px;font-size:12.8px;line-height:12.8px;color:#374151;font-weight:400;white-space:nowrap">MINORISTA EN LOCAL</div>
<div style="position:absolute;right:987px;top:940.47px;font-size:13.5px;line-height:13.5px;color:#1f2937;font-weight:700;white-space:nowrap">100%</div>
<div class="abs" style="left:504px;top:965px;width:429px;height:14px;border-radius:7px;background:#3b82f6"></div>
<svg style="position:absolute;left:972.9px;top:896.5px;width:16.7px;height:16.7px" viewBox="0 0 24 24"><path fill="#a855f7" d="M16 11c1.66 0 2.99-1.34 2.99-3S17.66 5 16 5c-1.66 0-3 1.34-3 3s1.34 3 3 3zm-8 0c1.66 0 2.99-1.34 2.99-3S9.66 5 8 5C6.34 5 5 6.34 5 8s1.34 3 3 3zm0 2c-2.33 0-7 1.17-7 3.5V19h14v-2.5c0-2.33-4.67-3.5-7-3.5zm8 0c-.29 0-.62.02-.97.05 1.16.84 1.97 1.97 1.97 3.45V19h6v-2.5c0-2.33-4.67-3.5-7-3.5z"/></svg>
<div style="position:absolute;left:996.4px;top:898.58px;font-size:14.2px;line-height:14.2px;color:#1f2937;font-weight:400;white-space:nowrap;letter-spacing:.4px;-webkit-text-stroke:.2px #1f2937">Vendedores</div>
<div class="abs" style="left:973px;top:923px;width:430px;height:1px;background:#eef2f7"></div>
<div style="position:absolute;left:973px;top:941.75px;font-size:12.7px;line-height:12.7px;color:#374151;font-weight:400;white-space:nowrap">ROCIO</div>
<div style="position:absolute;right:517px;top:941.07px;font-size:13.5px;line-height:13.5px;color:#1f2937;font-weight:700;white-space:nowrap">14%</div>
<div class="abs" style="left:973px;top:965px;width:430px;height:14px;border-radius:7px;background:#eef2f7;overflow:hidden"><div style="width:60.2px;height:14px;border-radius:7px;background:#3b82f6"></div></div>
<div style="position:absolute;left:973px;top:992.50px;font-size:12.7px;line-height:12.7px;color:#374151;font-weight:400;white-space:nowrap">SIN ASIGNAR</div>
<div style="position:absolute;right:517px;top:991.82px;font-size:13.5px;line-height:13.5px;color:#1f2937;font-weight:700;white-space:nowrap">28%</div>
<div class="abs" style="left:973px;top:1016.25px;width:430px;height:14px;border-radius:7px;background:#eef2f7;overflow:hidden"><div style="width:120.4px;height:14px;border-radius:7px;background:#8b5cf6"></div></div>
<div style="position:absolute;left:973px;top:1043.50px;font-size:12.7px;line-height:12.7px;color:#374151;font-weight:400;white-space:nowrap">CHRISTIAN</div>
<div style="position:absolute;right:517px;top:1042.82px;font-size:13.5px;line-height:13.5px;color:#1f2937;font-weight:700;white-space:nowrap">58%</div>
<div class="abs" style="left:973px;top:1067px;width:430px;height:14px;border-radius:7px;background:#eef2f7;overflow:hidden"><div style="width:249.4px;height:14px;border-radius:7px;background:#06b6d4"></div></div>
<svg style="position:absolute;left:1442.3px;top:896.8px;width:16.5px;height:16.5px" viewBox="0 0 24 24"><path fill="#06b6d4" d="M11.99 2C6.47 2 2 6.48 2 12s4.47 10 9.99 10C17.52 22 22 17.52 22 12S17.52 2 11.99 2zM12 20c-4.42 0-8-3.58-8-8s3.58-8 8-8 8 3.58 8 8-3.58 8-8 8zm.5-13H11v6l5.25 3.15.75-1.23-4.5-2.67z"/></svg>
<div style="position:absolute;left:1465.7px;top:898.58px;font-size:14.2px;line-height:14.2px;color:#1f2937;font-weight:400;white-space:nowrap;letter-spacing:.4px;-webkit-text-stroke:.2px #1f2937">Segmentado por hora</div>
<div class="abs" style="left:1442px;top:923px;width:430px;height:1px;background:#eef2f7"></div>
<div style="position:absolute;left:1443px;top:945.47px;font-size:12.2px;line-height:12.2px;color:#4b5563;font-weight:400;white-space:nowrap">10:00</div>
<div class="abs" style="left:1496px;top:939.4px;width:376px;height:26px;border-radius:13px;background:#eff2f8;overflow:hidden"><div style="width:8px;height:26px;border-radius:13px;background:linear-gradient(90deg,#22d3ee,#3b82f6)"></div></div>
<div style="position:absolute;left:1443px;top:979.37px;font-size:12.2px;line-height:12.2px;color:#4b5563;font-weight:400;white-space:nowrap">11:00</div>
<div class="abs" style="left:1496px;top:973.3px;width:376px;height:26px;border-radius:13px;background:#eff2f8;overflow:hidden"><div style="width:110px;height:26px;border-radius:13px;background:linear-gradient(90deg,#22d3ee,#3b82f6)"></div></div>
<div style="position:absolute;left:1443px;top:1013.27px;font-size:12.2px;line-height:12.2px;color:#4b5563;font-weight:400;white-space:nowrap">12:00</div>
<div class="abs" style="left:1496px;top:1007.2px;width:376px;height:26px;border-radius:13px;background:#eff2f8;overflow:hidden"><div style="width:11px;height:26px;border-radius:13px;background:linear-gradient(90deg,#22d3ee,#3b82f6)"></div></div>
<div style="position:absolute;left:1443px;top:1047.17px;font-size:12.2px;line-height:12.2px;color:#4b5563;font-weight:400;white-space:nowrap">13:00</div>
<div class="abs" style="left:1496px;top:1041.1px;width:376px;height:26px;border-radius:13px;background:#eff2f8;overflow:hidden"><div style="width:63px;height:26px;border-radius:13px;background:linear-gradient(90deg,#22d3ee,#3b82f6)"></div></div>
<div style="position:absolute;left:1443px;top:1081.07px;font-size:12.2px;line-height:12.2px;color:#4b5563;font-weight:400;white-space:nowrap">14:00</div>
<div class="abs" style="left:1496px;top:1075.0px;width:376px;height:26px;border-radius:13px;background:#eff2f8;overflow:hidden"><div style="width:5px;height:26px;border-radius:13px;background:linear-gradient(90deg,#22d3ee,#3b82f6)"></div></div>
</body></html>
